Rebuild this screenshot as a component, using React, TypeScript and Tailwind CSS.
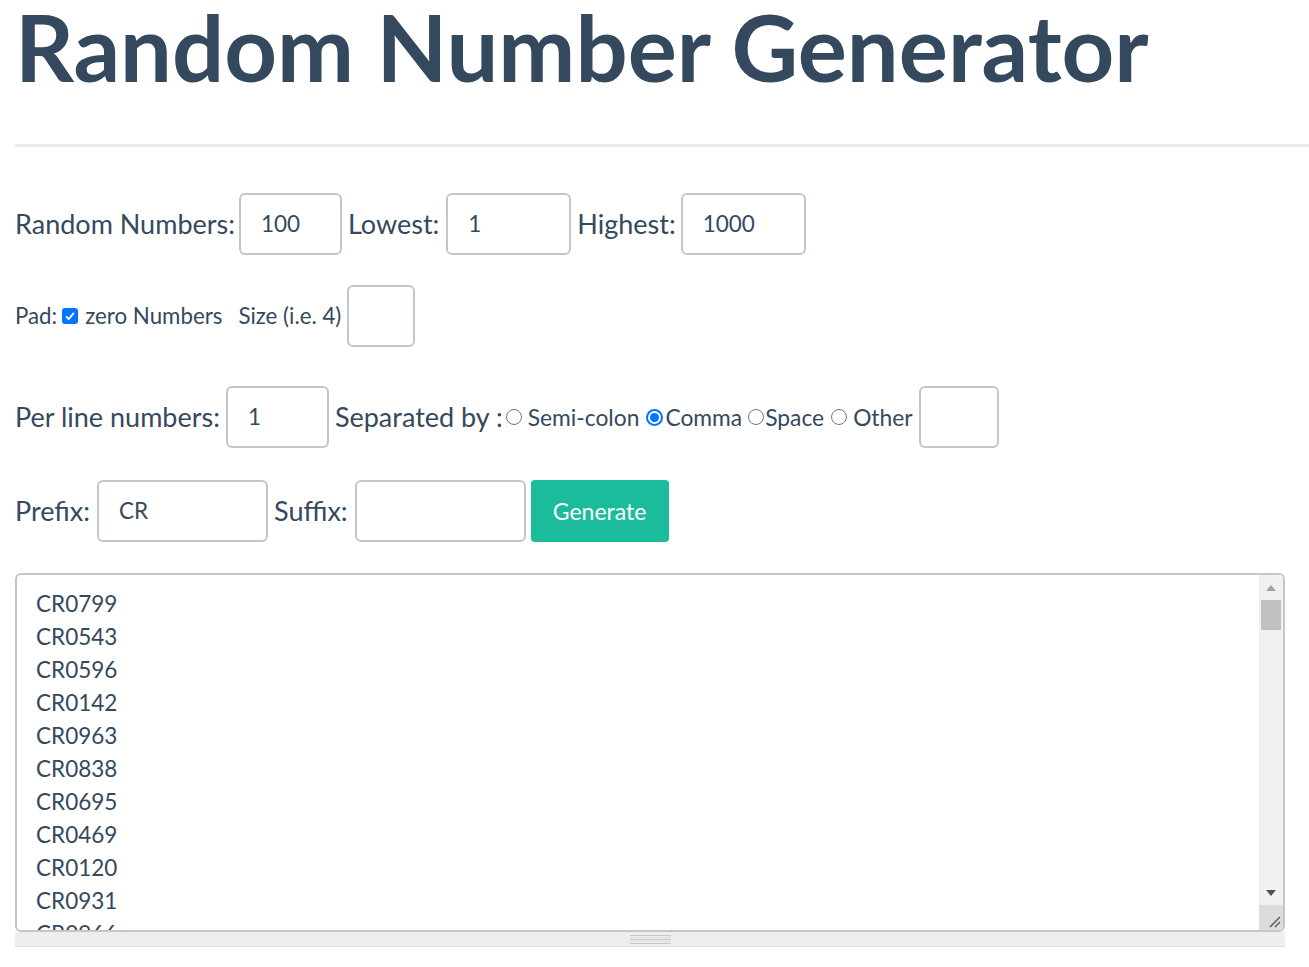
import React from "react";

const lines = [
  "CR0799",
  "CR0543",
  "CR0596",
  "CR0142",
  "CR0963",
  "CR0838",
  "CR0695",
  "CR0469",
  "CR0120",
  "CR0931",
  "CR0966",
  "CR0412",
];

function Box({ w, value }: { w: string; value?: string }) {
  return (
    <div
      className={`${w} h-[62px] shrink-0 rounded-[6px] border-2 border-[#c3c7cb] bg-white flex items-center pl-[20px] text-[22.5px] text-[#34495e]`}
    >
      {value}
    </div>
  );
}

function Radio({ checked }: { checked?: boolean }) {
  return checked ? (
    <span className="flex h-[17px] w-[17px] shrink-0 items-center justify-center rounded-full border-2 border-[#0075ff] bg-white">
      <span className="h-[9px] w-[9px] rounded-full bg-[#0075ff]" />
    </span>
  ) : (
    <span className="block h-[16px] w-[16px] shrink-0 rounded-full border border-[#767676] bg-white" />
  );
}

export default function App() {
  return (
    <div
      className="min-h-screen bg-white text-[#34495e] overflow-hidden"
      style={{ fontFamily: "Lato, 'Open Sans', sans-serif" }}
    >
      <h1 className="pl-[15px] pt-[1px] text-[92px] font-bold leading-none text-[#34495e]">
        Random Number Generator
      </h1>
      <div className="ml-[15px] mt-[51px] h-[3px] bg-[#e7e9ee]" />

      <div className="px-[15px]">
        {/* row 1 */}
        <div className="mt-[46px] flex items-center text-[27px]">
          <span>Random Numbers:</span>
          <span className="ml-[4px]">
            <Box w="w-[103px]" value="100" />
          </span>
          <span className="ml-[6px]">Lowest:</span>
          <span className="ml-[7px]">
            <Box w="w-[125px]" value="1" />
          </span>
          <span className="ml-[6px]">Highest:</span>
          <span className="ml-[5px]">
            <Box w="w-[125px]" value="1000" />
          </span>
        </div>

        {/* row 2 */}
        <div className="mt-[30px] flex items-center text-[22.3px]">
          <span>Pad:</span>
          <span className="ml-[5px] inline-flex h-[16px] w-[16px] items-center justify-center rounded-[3px] bg-[#0075ff]">
            <svg viewBox="0 0 16 16" className="h-[14px] w-[14px]">
              <path d="M3.5 8.5l3 3 6-7" fill="none" stroke="white" strokeWidth="2.2" />
            </svg>
          </span>
          <span className="ml-[7px]">zero Numbers</span>
          <span className="ml-[16px]">Size (i.e. 4)</span>
          <span className="ml-[6px]">
            <Box w="w-[68px]" />
          </span>
        </div>

        {/* row 3 */}
        <div className="mt-[39px] flex items-center text-[27px]">
          <span>Per line numbers:</span>
          <span className="ml-[6px]">
            <Box w="w-[103px]" value="1" />
          </span>
          <span className="ml-[6px]">Separated by :</span>
          <span className="ml-[3px] flex items-center text-[22.8px]">
            <Radio />
            <span className="ml-[6px]">Semi-colon</span>
            <span className="ml-[7px] flex">
              <Radio checked />
            </span>
            <span className="ml-[2px]">Comma</span>
            <span className="ml-[6px] flex">
              <Radio />
            </span>
            <span className="ml-[1px]">Space</span>
            <span className="ml-[7px] flex">
              <Radio />
            </span>
            <span className="ml-[6px]">Other</span>
          </span>
          <span className="ml-[6px]">
            <Box w="w-[80px]" />
          </span>
        </div>

        {/* row 4 */}
        <div className="mt-[32px] flex items-center text-[27px]">
          <span>Prefix:</span>
          <span className="ml-[7px]">
            <Box w="w-[171px]" value="CR" />
          </span>
          <span className="ml-[6px]">Suffix:</span>
          <span className="ml-[7px]">
            <Box w="w-[171px]" />
          </span>
          <button className="ml-[5px] h-[62px] w-[138px] rounded-[4px] bg-[#1abc9c] text-[23px] text-white">
            Generate
          </button>
        </div>

        {/* output */}
        <div className="mt-[31px] w-[1270px]">
          <div className="flex h-[359px] overflow-hidden rounded-[6px] border-2 border-[#c3c7cb] bg-white">
            <div className="flex-1 overflow-hidden pl-[19px] pt-[12px] text-[22.5px] leading-[33px] text-[#34495e]">
              {lines.map((l) => (
                <div key={l}>{l}</div>
              ))}
            </div>
            <div className="flex w-[24px] flex-col bg-[#f1f1f1]">
              <div className="flex h-[25px] items-center justify-center">
                <svg width="10" height="6" viewBox="0 0 10 6">
                  <path d="M0 6L5 0l5 6z" fill="#a3a3a3" />
                </svg>
              </div>
              <div className="mx-[2px] h-[30px] bg-[#c1c1c1]" />
              <div className="flex-1" />
              <div className="flex h-[25px] items-center justify-center">
                <svg width="10" height="6" viewBox="0 0 10 6">
                  <path d="M0 0h10L5 6z" fill="#505050" />
                </svg>
              </div>
              <div className="relative h-[25px] bg-[#dcdcdc]">
                <svg className="absolute bottom-[2px] right-[2px]" width="12" height="12" viewBox="0 0 12 12">
                  <path d="M1 11L11 1M6 11L11 6" stroke="#555" strokeWidth="1.3" />
                </svg>
              </div>
            </div>
          </div>
          <div className="flex h-[15px] items-center justify-center border-b border-[#dddddd] bg-[#eeeeee]">
            <div className="flex w-[41px] flex-col gap-[1px]">
              <div className="h-[1px] bg-[#c6c6c6]" />
              <div className="h-[1px] bg-[#dedede]" />
              <div className="h-[1px] bg-[#c6c6c6]" />
              <div className="h-[1px] bg-[#dedede]" />
              <div className="h-[1px] bg-[#c6c6c6]" />
            </div>
          </div>
        </div>
      </div>
    </div>
  );
}
